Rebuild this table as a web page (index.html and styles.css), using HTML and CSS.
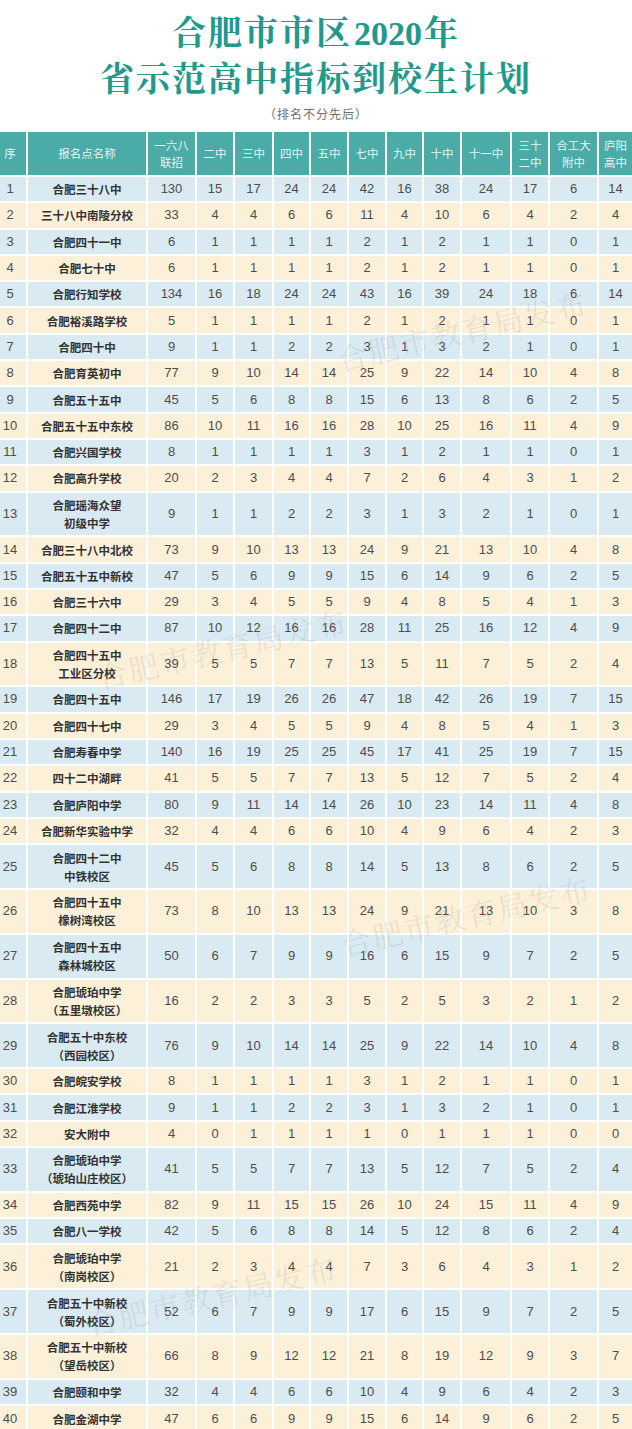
FILE: index.html
```html
<!DOCTYPE html>
<html lang="zh-CN">
<head>
<meta charset="utf-8">
<title>合肥市市区2020年省示范高中指标到校生计划</title>
<link rel="stylesheet" href="styles.css">
</head>
<body>
<header class="head">
  <h1 class="title"><span class="line">合肥市市区<span class="digits">2020</span>年</span><span class="line">省示范高中指标到校生计划</span></h1>
  <p class="note">（排名不分先后）</p>
</header>
<div class="wrap">
<table class="grid">
  <colgroup>
    <col class="w-no"><col class="w-name"><col class="w-a"><col class="w-b"><col class="w-c"><col class="w-d"><col class="w-e"><col class="w-f"><col class="w-g"><col class="w-h"><col class="w-i"><col class="w-j"><col class="w-k"><col class="w-l">
  </colgroup>
  <thead>
    <tr><th class="no">序</th><th>报名点名称</th><th>一六八<br>联招</th><th>二中</th><th>三中</th><th>四中</th><th>五中</th><th>七中</th><th>九中</th><th>十中</th><th>十一中</th><th>三十<br>二中</th><th>合工大<br>附中</th><th>庐阳<br>高中</th></tr>
  </thead>
  <tbody>
    <tr><td class="no">1</td><td class="name">合肥三十八中</td><td>130</td><td>15</td><td>17</td><td>24</td><td>24</td><td>42</td><td>16</td><td>38</td><td>24</td><td>17</td><td>6</td><td>14</td></tr>
    <tr><td class="no">2</td><td class="name">三十八中南陵分校</td><td>33</td><td>4</td><td>4</td><td>6</td><td>6</td><td>11</td><td>4</td><td>10</td><td>6</td><td>4</td><td>2</td><td>4</td></tr>
    <tr><td class="no">3</td><td class="name">合肥四十一中</td><td>6</td><td>1</td><td>1</td><td>1</td><td>1</td><td>2</td><td>1</td><td>2</td><td>1</td><td>1</td><td>0</td><td>1</td></tr>
    <tr><td class="no">4</td><td class="name">合肥七十中</td><td>6</td><td>1</td><td>1</td><td>1</td><td>1</td><td>2</td><td>1</td><td>2</td><td>1</td><td>1</td><td>0</td><td>1</td></tr>
    <tr><td class="no">5</td><td class="name">合肥行知学校</td><td>134</td><td>16</td><td>18</td><td>24</td><td>24</td><td>43</td><td>16</td><td>39</td><td>24</td><td>18</td><td>6</td><td>14</td></tr>
    <tr><td class="no">6</td><td class="name">合肥裕溪路学校</td><td>5</td><td>1</td><td>1</td><td>1</td><td>1</td><td>2</td><td>1</td><td>2</td><td>1</td><td>1</td><td>0</td><td>1</td></tr>
    <tr><td class="no">7</td><td class="name">合肥四十中</td><td>9</td><td>1</td><td>1</td><td>2</td><td>2</td><td>3</td><td>1</td><td>3</td><td>2</td><td>1</td><td>0</td><td>1</td></tr>
    <tr><td class="no">8</td><td class="name">合肥育英初中</td><td>77</td><td>9</td><td>10</td><td>14</td><td>14</td><td>25</td><td>9</td><td>22</td><td>14</td><td>10</td><td>4</td><td>8</td></tr>
    <tr><td class="no">9</td><td class="name">合肥五十五中</td><td>45</td><td>5</td><td>6</td><td>8</td><td>8</td><td>15</td><td>6</td><td>13</td><td>8</td><td>6</td><td>2</td><td>5</td></tr>
    <tr><td class="no">10</td><td class="name">合肥五十五中东校</td><td>86</td><td>10</td><td>11</td><td>16</td><td>16</td><td>28</td><td>10</td><td>25</td><td>16</td><td>11</td><td>4</td><td>9</td></tr>
    <tr><td class="no">11</td><td class="name">合肥兴国学校</td><td>8</td><td>1</td><td>1</td><td>1</td><td>1</td><td>3</td><td>1</td><td>2</td><td>1</td><td>1</td><td>0</td><td>1</td></tr>
    <tr><td class="no">12</td><td class="name">合肥高升学校</td><td>20</td><td>2</td><td>3</td><td>4</td><td>4</td><td>7</td><td>2</td><td>6</td><td>4</td><td>3</td><td>1</td><td>2</td></tr>
    <tr class="dbl"><td class="no">13</td><td class="name">合肥瑶海众望<br>初级中学</td><td>9</td><td>1</td><td>1</td><td>2</td><td>2</td><td>3</td><td>1</td><td>3</td><td>2</td><td>1</td><td>0</td><td>1</td></tr>
    <tr><td class="no">14</td><td class="name">合肥三十八中北校</td><td>73</td><td>9</td><td>10</td><td>13</td><td>13</td><td>24</td><td>9</td><td>21</td><td>13</td><td>10</td><td>4</td><td>8</td></tr>
    <tr><td class="no">15</td><td class="name">合肥五十五中新校</td><td>47</td><td>5</td><td>6</td><td>9</td><td>9</td><td>15</td><td>6</td><td>14</td><td>9</td><td>6</td><td>2</td><td>5</td></tr>
    <tr><td class="no">16</td><td class="name">合肥三十六中</td><td>29</td><td>3</td><td>4</td><td>5</td><td>5</td><td>9</td><td>4</td><td>8</td><td>5</td><td>4</td><td>1</td><td>3</td></tr>
    <tr><td class="no">17</td><td class="name">合肥四十二中</td><td>87</td><td>10</td><td>12</td><td>16</td><td>16</td><td>28</td><td>11</td><td>25</td><td>16</td><td>12</td><td>4</td><td>9</td></tr>
    <tr class="dbl"><td class="no">18</td><td class="name">合肥四十五中<br>工业区分校</td><td>39</td><td>5</td><td>5</td><td>7</td><td>7</td><td>13</td><td>5</td><td>11</td><td>7</td><td>5</td><td>2</td><td>4</td></tr>
    <tr><td class="no">19</td><td class="name">合肥四十五中</td><td>146</td><td>17</td><td>19</td><td>26</td><td>26</td><td>47</td><td>18</td><td>42</td><td>26</td><td>19</td><td>7</td><td>15</td></tr>
    <tr><td class="no">20</td><td class="name">合肥四十七中</td><td>29</td><td>3</td><td>4</td><td>5</td><td>5</td><td>9</td><td>4</td><td>8</td><td>5</td><td>4</td><td>1</td><td>3</td></tr>
    <tr><td class="no">21</td><td class="name">合肥寿春中学</td><td>140</td><td>16</td><td>19</td><td>25</td><td>25</td><td>45</td><td>17</td><td>41</td><td>25</td><td>19</td><td>7</td><td>15</td></tr>
    <tr><td class="no">22</td><td class="name">四十二中湖畔</td><td>41</td><td>5</td><td>5</td><td>7</td><td>7</td><td>13</td><td>5</td><td>12</td><td>7</td><td>5</td><td>2</td><td>4</td></tr>
    <tr><td class="no">23</td><td class="name">合肥庐阳中学</td><td>80</td><td>9</td><td>11</td><td>14</td><td>14</td><td>26</td><td>10</td><td>23</td><td>14</td><td>11</td><td>4</td><td>8</td></tr>
    <tr><td class="no">24</td><td class="name">合肥新华实验中学</td><td>32</td><td>4</td><td>4</td><td>6</td><td>6</td><td>10</td><td>4</td><td>9</td><td>6</td><td>4</td><td>2</td><td>3</td></tr>
    <tr class="dbl"><td class="no">25</td><td class="name">合肥四十二中<br>中铁校区</td><td>45</td><td>5</td><td>6</td><td>8</td><td>8</td><td>14</td><td>5</td><td>13</td><td>8</td><td>6</td><td>2</td><td>5</td></tr>
    <tr class="dbl"><td class="no">26</td><td class="name">合肥四十五中<br>橡树湾校区</td><td>73</td><td>8</td><td>10</td><td>13</td><td>13</td><td>24</td><td>9</td><td>21</td><td>13</td><td>10</td><td>3</td><td>8</td></tr>
    <tr class="dbl"><td class="no">27</td><td class="name">合肥四十五中<br>森林城校区</td><td>50</td><td>6</td><td>7</td><td>9</td><td>9</td><td>16</td><td>6</td><td>15</td><td>9</td><td>7</td><td>2</td><td>5</td></tr>
    <tr class="dbl"><td class="no">28</td><td class="name">合肥琥珀中学<br>（五里墩校区）</td><td>16</td><td>2</td><td>2</td><td>3</td><td>3</td><td>5</td><td>2</td><td>5</td><td>3</td><td>2</td><td>1</td><td>2</td></tr>
    <tr class="dbl"><td class="no">29</td><td class="name">合肥五十中东校<br>（西园校区）</td><td>76</td><td>9</td><td>10</td><td>14</td><td>14</td><td>25</td><td>9</td><td>22</td><td>14</td><td>10</td><td>4</td><td>8</td></tr>
    <tr><td class="no">30</td><td class="name">合肥皖安学校</td><td>8</td><td>1</td><td>1</td><td>1</td><td>1</td><td>3</td><td>1</td><td>2</td><td>1</td><td>1</td><td>0</td><td>1</td></tr>
    <tr><td class="no">31</td><td class="name">合肥江淮学校</td><td>9</td><td>1</td><td>1</td><td>2</td><td>2</td><td>3</td><td>1</td><td>3</td><td>2</td><td>1</td><td>0</td><td>1</td></tr>
    <tr><td class="no">32</td><td class="name">安大附中</td><td>4</td><td>0</td><td>1</td><td>1</td><td>1</td><td>1</td><td>0</td><td>1</td><td>1</td><td>1</td><td>0</td><td>0</td></tr>
    <tr class="dbl"><td class="no">33</td><td class="name">合肥琥珀中学<br>（琥珀山庄校区）</td><td>41</td><td>5</td><td>5</td><td>7</td><td>7</td><td>13</td><td>5</td><td>12</td><td>7</td><td>5</td><td>2</td><td>4</td></tr>
    <tr><td class="no">34</td><td class="name">合肥西苑中学</td><td>82</td><td>9</td><td>11</td><td>15</td><td>15</td><td>26</td><td>10</td><td>24</td><td>15</td><td>11</td><td>4</td><td>9</td></tr>
    <tr><td class="no">35</td><td class="name">合肥八一学校</td><td>42</td><td>5</td><td>6</td><td>8</td><td>8</td><td>14</td><td>5</td><td>12</td><td>8</td><td>6</td><td>2</td><td>4</td></tr>
    <tr class="dbl"><td class="no">36</td><td class="name">合肥琥珀中学<br>（南岗校区）</td><td>21</td><td>2</td><td>3</td><td>4</td><td>4</td><td>7</td><td>3</td><td>6</td><td>4</td><td>3</td><td>1</td><td>2</td></tr>
    <tr class="dbl"><td class="no">37</td><td class="name">合肥五十中新校<br>（蜀外校区）</td><td>52</td><td>6</td><td>7</td><td>9</td><td>9</td><td>17</td><td>6</td><td>15</td><td>9</td><td>7</td><td>2</td><td>5</td></tr>
    <tr class="dbl"><td class="no">38</td><td class="name">合肥五十中新校<br>（望岳校区）</td><td>66</td><td>8</td><td>9</td><td>12</td><td>12</td><td>21</td><td>8</td><td>19</td><td>12</td><td>9</td><td>3</td><td>7</td></tr>
    <tr><td class="no">39</td><td class="name">合肥颐和中学</td><td>32</td><td>4</td><td>4</td><td>6</td><td>6</td><td>10</td><td>4</td><td>9</td><td>6</td><td>4</td><td>2</td><td>3</td></tr>
    <tr><td class="no">40</td><td class="name">合肥金湖中学</td><td>47</td><td>6</td><td>6</td><td>9</td><td>9</td><td>15</td><td>6</td><td>14</td><td>9</td><td>6</td><td>2</td><td>5</td></tr>
  </tbody>
</table>
<span class="mark mark-1">合肥市教育局发布</span>
<span class="mark mark-2">合肥市教育局发布</span>
<span class="mark mark-3">合肥市教育局发布</span>
<span class="mark mark-4">合肥市教育局发布</span>
</div>
</body>
</html>
```

FILE: styles.css
```css
html, body {
  margin: 0;
  padding: 0;
  background: #ffffff;
}

body {
  width: 632px;
  overflow: hidden;
  font-family: "Noto Sans CJK SC", "Liberation Sans", sans-serif;
}

.head {
  height: 132px;
  padding-top: 9px;
  box-sizing: border-box;
  text-align: center;
}

.title {
  margin: 0;
  font-family: "Noto Serif CJK SC", "Noto Sans CJK SC", serif;
  font-weight: 700;
  font-size: 34px;
  line-height: 43px;
  letter-spacing: 2px;
  color: #22998c;
}

.title .line {
  display: block;
}

.title .digits {
  font-family: "Liberation Serif", serif;
  font-weight: 700;
  letter-spacing: 0;
  margin: 0 2px;
}

.note {
  margin: 8px 0 0;
  font-size: 12px;
  line-height: 16px;
  color: #6e6e6e;
  letter-spacing: 1px;
}

.wrap {
  position: relative;
  overflow: hidden;
}

.grid {
  width: 632px;
  table-layout: fixed;
  border-collapse: collapse;
  border-style: hidden;
}

.w-no { width: 27px; }
.w-name { width: 120px; }
.w-a { width: 49px; }
.w-b { width: 38px; }
.w-c { width: 39px; }
.w-d { width: 37px; }
.w-e { width: 38px; }
.w-f { width: 38px; }
.w-g { width: 37px; }
.w-h { width: 38px; }
.w-i { width: 50px; }
.w-j { width: 38px; }
.w-k { width: 49px; }
.w-l { width: 34px; }

.grid th,
.grid td {
  border: 2px solid #ffffff;
  padding: 0;
  text-align: center;
  vertical-align: middle;
  white-space: nowrap;
}

.grid thead tr {
  height: 44px;
}

.grid th {
  background: #4aaba7;
  color: #e6f5f2;
  font-weight: 400;
  font-size: 11.5px;
  line-height: 17px;
}

.grid th.no,
.grid td.no {
  padding-right: 6px;
}

.grid tbody tr {
  height: 26.3px;
}

.grid tbody tr.dbl {
  height: 44.8px;
}

.grid tbody tr:nth-child(odd) td {
  background: #d9eaf2;
}

.grid tbody tr:nth-child(even) td {
  background: #fcf0d9;
}

.grid td {
  font-family: "Liberation Sans", "Noto Sans CJK SC", sans-serif;
  font-size: 13px;
  color: #4d4d4d;
  line-height: 16px;
}

.grid td.name {
  font-family: "Noto Sans CJK SC", sans-serif;
  font-weight: 700;
  font-size: 11.5px;
  line-height: 18px;
  color: #333333;
}

.mark {
  position: absolute;
  width: 256px;
  font-family: "Noto Serif CJK SC", "Noto Sans CJK SC", serif;
  font-weight: 300;
  font-size: 30px;
  line-height: 32px;
  letter-spacing: 2px;
  color: rgba(120, 120, 120, 0.17);
  white-space: nowrap;
  transform: rotate(-13deg);
  pointer-events: none;
}

.mark-1 { left: 334px; top: 182px; }
.mark-2 { left: 94px; top: 500px; }
.mark-3 { left: 338px; top: 767px; }
.mark-4 { left: 84px; top: 1147px; }
```
